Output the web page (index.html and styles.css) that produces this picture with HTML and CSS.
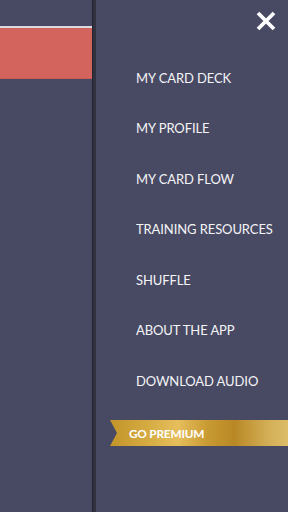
FILE: index.html
```html
<!DOCTYPE html>
<html>
<head>
<meta charset="utf-8">
<link rel="stylesheet" href="styles.css">
</head>
<body>
<div class="app">
  <div class="main">
    <div class="topline"></div>
    <div class="redbar"></div>
  </div>
  <div class="divider"></div>
  <nav class="drawer">
    <div class="closerow">
      <svg class="close" width="22" height="22" viewBox="0 0 22 22"><path d="M3 3 L19 19 M19 3 L3 19" stroke="#fff" stroke-width="3.8" stroke-linecap="butt"/></svg>
    </div>
    <ul class="menu">
      <li>MY CARD DECK</li>
      <li>MY PROFILE</li>
      <li>MY CARD FLOW</li>
      <li>TRAINING RESOURCES</li>
      <li>SHUFFLE</li>
      <li>ABOUT THE APP</li>
      <li>DOWNLOAD AUDIO</li>
    </ul>
    <div class="premium"><span>GO PREMIUM</span></div>
  </nav>
</div>
</body>
</html>
```
FILE: styles.css
```css
* { box-sizing: border-box; }
html, body { margin: 0; padding: 0; }
body { width: 288px; height: 512px; overflow: hidden; background: #484a64; font-family: Lato, "Noto Sans", sans-serif; }
.app { display: flex; height: 512px; }
.main { width: 92px; flex: none; padding-top: 26px; background: #484a64; }
.topline { height: 2px; background: #d9dbe0; }
.redbar { height: 51px; background: #d3645d; border-bottom: 1px solid #c85a55; }
.divider { width: 4px; flex: none; background: linear-gradient(to right, #23242f 0, #23242f 1px, #30323f 1px, #30323f 100%); }
.drawer { flex: 1; background: #484a64; display: flex; flex-direction: column; }
.closerow { display: flex; justify-content: flex-end; padding: 10px 11px 0 0; height: 40px; }
.close { display: block; }
.menu { list-style: none; margin: 0; padding: 0 0 0 40px; }
.menu li { color: #f4f4f6; font-size: 13px; height: 50.5px; line-height: 50.5px; letter-spacing: -0.1px; }
.menu li:first-child { margin-top: 12.5px; }
.premium { margin-top: 14px; margin-left: 14px; height: 26px; display: flex; align-items: center; padding-left: 19px;
  background: linear-gradient(to right, #c29429 0%, #d4aa40 20%, #e6be5c 38%, #c89a32 55%, #b98825 70%, #d2ad55 88%, #ddbd68 100%);
  clip-path: polygon(0 0, 100% 0, 100% 100%, 0 100%, 7px 50%); }
.premium span { color: #fff; font-weight: 700; font-size: 11.8px; letter-spacing: -0.2px; }
```
